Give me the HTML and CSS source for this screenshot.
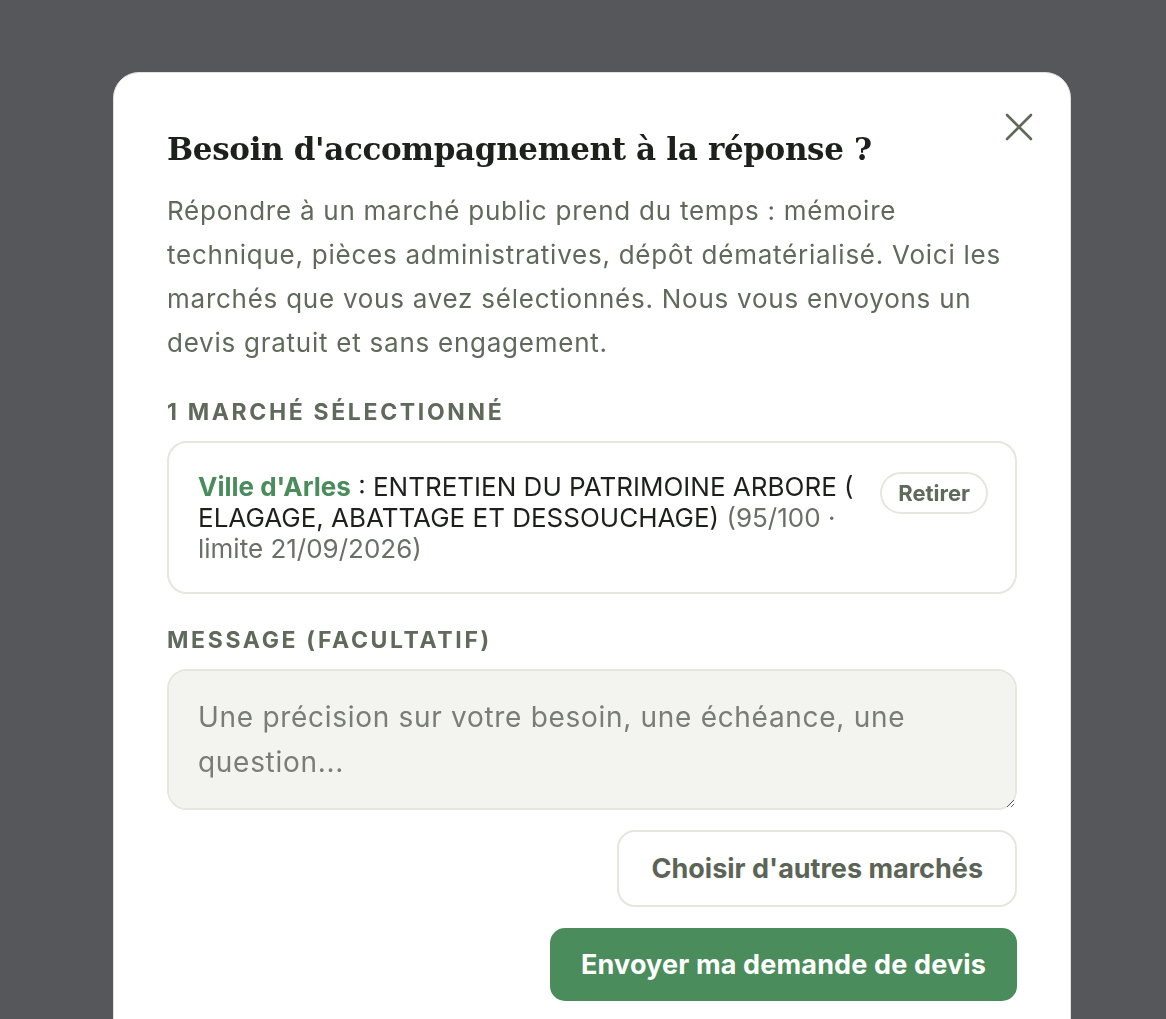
FILE: index.html
```html
<!DOCTYPE html>
<html lang="fr">
<head>
<meta charset="utf-8">
<title>Besoin d'accompagnement</title>
<link rel="stylesheet" href="styles.css">
</head>
<body>
<div class="overlay">
  <div class="modal" role="dialog">
    <button class="close" aria-label="Fermer">
      <svg width="28" height="28" viewBox="0 0 28 28"><path d="M2 2L26 26M26 2L2 26" stroke="#5f6a5b" stroke-width="2.6" stroke-linecap="round"/></svg>
    </button>
    <h2 class="title">Besoin d'accompagnement à la réponse ?</h2>
    <p class="intro">Répondre à un marché public prend du temps : mémoire technique, pièces administratives, dépôt dématérialisé. Voici les marchés que vous avez sélectionnés. Nous vous envoyons un devis gratuit et sans engagement.</p>
    <div class="label">1 marché sélectionné</div>
    <div class="card">
      <div class="card-text"><span class="buyer">Ville d'Arles</span> : ENTRETIEN DU PATRIMOINE ARBORE ( ELAGAGE, ABATTAGE ET DESSOUCHAGE) <span class="meta">(95/100 · limite 21/09/2026)</span></div>
      <button class="remove">Retirer</button>
    </div>
    <div class="label">Message (facultatif)</div>
    <textarea class="message" placeholder="Une précision sur votre besoin, une échéance, une question..."></textarea>
    <div class="actions">
      <button class="btn-secondary">Choisir d'autres marchés</button>
      <button class="btn-primary">Envoyer ma demande de devis</button>
    </div>
  </div>
</div>
</body>
</html>
```
FILE: styles.css
```css
html, body {
  margin: 0;
  padding: 0;
  height: 100%;
  overflow: hidden;
}
body {
  background: #55575b;
  font-family: Inter, "Noto Sans", sans-serif;
}
.overlay {
  padding: 72px 0 0 113px;
}
.modal {
  position: relative;
  box-sizing: border-box;
  width: 958px;
  background: #ffffff;
  border: 1px solid #e2e2da;
  border-radius: 26px;
  padding: 50px 53px 60px;
}
.close {
  position: absolute;
  top: 40px;
  right: 37px;
  background: none;
  border: 0;
  padding: 0;
  width: 28px;
  height: 28px;
  cursor: pointer;
}
.close svg { display: block; }
.title {
  margin: 0;
  font-family: "DejaVu Serif", "Liberation Serif", serif;
  font-weight: 700;
  font-size: 31px;
  letter-spacing: -0.35px;
  line-height: 52px;
  color: #1d201b;
}
.intro {
  margin: 14px 0 0;
  max-width: 840px;
  font-size: 26px;
  letter-spacing: 0.75px;
  line-height: 44px;
  color: #5f6a5b;
}
.label {
  margin-top: 32px;
  font-size: 23px;
  font-weight: 700;
  letter-spacing: 2.65px;
  text-transform: uppercase;
  color: #5f6a5b;
  line-height: 30px;
}
.card {
  margin-top: 14px;
  display: flex;
  align-items: flex-start;
  gap: 14px;
  border: 2px solid #e6e6de;
  border-radius: 20px;
  padding: 28px 27px 28px 29px;
}
.card-text {
  flex: 1;
  font-size: 26px;
  line-height: 31px;
  color: #1d201b;
}
.buyer {
  color: #4a8c5c;
  font-weight: 700;
}
.meta {
  color: #6b7067;
}
.remove {
  flex: none;
  margin-top: 1px;
  font-family: Inter, "Noto Sans", sans-serif;
  font-size: 22px;
  font-weight: 700;
  color: #5f6a5b;
  background: #fff;
  border: 2px solid #e6e6de;
  border-radius: 22px;
  padding: 6px 16px;
  line-height: 26px;
}
.card + .label {
  margin-top: 31px;
}
.message {
  display: block;
  box-sizing: border-box;
  margin-top: 14px;
  width: 100%;
  height: 141px;
  background: #f3f3f0;
  border: 2px solid #e6e6de;
  border-radius: 20px;
  padding: 24px 29px;
  font-family: Inter, "Noto Sans", sans-serif;
  font-size: 28px;
  letter-spacing: 0.7px;
  line-height: 45px;
  color: #1d201b;
  resize: vertical;
}
.message::placeholder {
  color: #7a7c76;
}
.actions {
  margin-top: 20px;
  display: flex;
  flex-direction: column;
  align-items: flex-end;
  gap: 21px;
}
.btn-secondary {
  font-family: Inter, "Noto Sans", sans-serif;
  font-size: 27px;
  font-weight: 700;
  color: #5c6457;
  background: #fff;
  border: 2px solid #e6e6de;
  border-radius: 18px;
  height: 77px;
  padding: 0 32px;
}
.btn-primary {
  font-family: Inter, "Noto Sans", sans-serif;
  font-size: 27px;
  font-weight: 700;
  letter-spacing: 0.15px;
  color: #ffffff;
  background: #4a8c5c;
  border: 0;
  border-radius: 15px;
  height: 73px;
  padding: 0 31px;
}
```
